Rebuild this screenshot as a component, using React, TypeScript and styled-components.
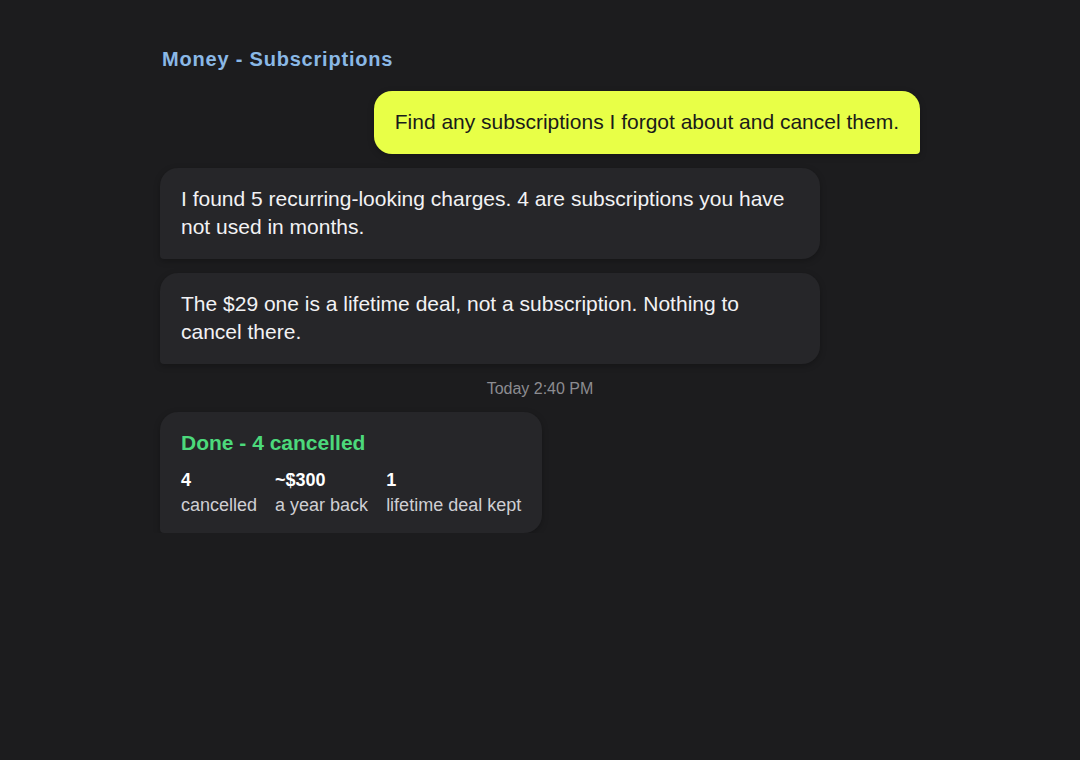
import React from "react";
import styled, { createGlobalStyle } from "styled-components";

const Global = createGlobalStyle`
  html, body { margin: 0; padding: 0; background: #1c1c1e; }
  body { font-family: "Liberation Sans", Arial, sans-serif; color: #f2f2f4; }
`;

const Page = styled.div`
  width: 760px;
  margin: 0 auto;
  padding-top: 46px;
  display: flex;
  flex-direction: column;
  gap: 14px;
`;

const Title = styled.h1`
  margin: 0 0 5px 2px;
  font-size: 20px;
  line-height: 26px;
  font-weight: 700;
  letter-spacing: 0.8px;
  color: #8ab8e6;
`;

const Bubble = styled.div<{ $user?: boolean }>`
  align-self: ${(p) => (p.$user ? "flex-end" : "flex-start")};
  max-width: 660px;
  box-sizing: border-box;
  padding: 17px 21px 18px;
  font-size: 21px;
  line-height: 28px;
  border-radius: ${(p) => (p.$user ? "18px 18px 4px 18px" : "18px 18px 18px 4px")};
  background: ${(p) => (p.$user ? "#e8ff47" : "#262629")};
  color: ${(p) => (p.$user ? "#1a1a1a" : "#f2f2f4")};
  box-shadow: 0 2px 6px rgba(0, 0, 0, 0.25);
`;

const Stamp = styled.div`
  padding-top: 1px;
  text-align: center;
  font-size: 16px;
  line-height: 19px;
  color: #8c8c91;
`;

const Card = styled.div`
  align-self: flex-start;
  padding: 18px 21px 15px;
  border-radius: 18px 18px 18px 4px;
  background: #262629;
  box-shadow: 0 2px 6px rgba(0, 0, 0, 0.25);
`;

const CardTitle = styled.div`
  font-size: 21px;
  line-height: 26px;
  font-weight: 700;
  color: #4cd97b;
  margin-bottom: 12px;
`;

const Stats = styled.div`
  display: flex;
  gap: 18px;
`;

const Stat = styled.div`
  display: flex;
  flex-direction: column;
`;

const StatValue = styled.div`
  font-size: 18px;
  line-height: 25px;
  font-weight: 700;
  color: #ffffff;
`;

const StatLabel = styled.div`
  font-size: 18px;
  line-height: 25px;
  color: #cfcfd3;
`;

const stats = [
  { v: "4", l: "cancelled" },
  { v: "~$300", l: "a year back" },
  { v: "1", l: "lifetime deal kept" },
];

export default function App() {
  return (
    <>
      <Global />
      <Page>
        <Title>Money - Subscriptions</Title>
        <Bubble $user>Find any subscriptions I forgot about and cancel them.</Bubble>
        <Bubble>
          I found 5 recurring-looking charges. 4 are subscriptions you have not used in months.
        </Bubble>
        <Bubble>
          The $29 one is a lifetime deal, not a subscription. Nothing to cancel there.
        </Bubble>
        <Stamp>Today 2:40 PM</Stamp>
        <Card>
          <CardTitle>Done - 4 cancelled</CardTitle>
          <Stats>
            {stats.map((s) => (
              <Stat key={s.l}>
                <StatValue>{s.v}</StatValue>
                <StatLabel>{s.l}</StatLabel>
              </Stat>
            ))}
          </Stats>
        </Card>
      </Page>
    </>
  );
}
